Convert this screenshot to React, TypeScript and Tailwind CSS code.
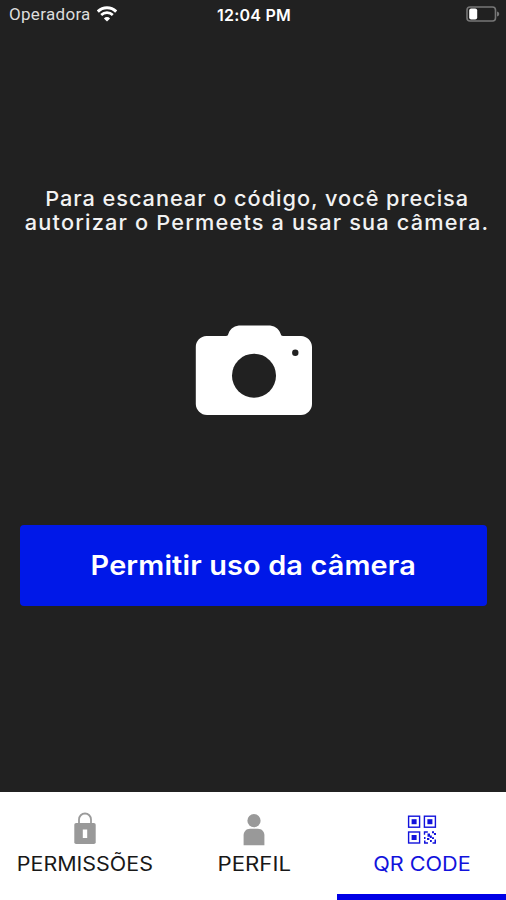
/**
 * Camera permission screen
 */

import React from 'react';

const WifiIcon: React.FC = () => (
  <svg width="20" height="16" viewBox="0 0 20 16" fill="none" stroke="#fff">
    <path d="M0.8 5.6a13 13 0 0 1 18.4 0" strokeWidth="3" />
    <path d="M4.2 9a8.2 8.2 0 0 1 11.6 0" strokeWidth="2.6" />
    <path d="M10 15.6l-3.1-3.2a4.4 4.4 0 0 1 6.2 0z" fill="#fff" stroke="none" />
  </svg>
);

const BatteryIcon: React.FC = () => (
  <svg width="34" height="16" viewBox="0 0 34 16">
    <rect x="1" y="1" width="28.5" height="14" rx="3" fill="none" stroke="#777" strokeWidth="1.6" />
    <rect x="3.2" y="2.5" width="8" height="11" rx="2" fill="#fff" />
    <path d="M31 5.5v5c1.8-.6 2.2-1.4 2.2-2.5s-.4-1.9-2.2-2.5z" fill="#777" />
  </svg>
);

const CameraIcon: React.FC = () => (
  <svg width="128" height="100" viewBox="0 0 128 100">
    <path
      d="M16.5 16H36c1.5 0 2-.8 2.5-2.5C40.5 8 45 5.5 51 5.5h27c6 0 10.5 2.5 12.5 8 .5 1.7 1 2.5 2.5 2.5h18c6 0 11 5 11 11v57c0 6-5 11-11 11H17c-6 0-11.2-5-11.2-11V27c0-6 4.7-11 10.7-11z"
      fill="#fff"
    />
    <circle cx="64" cy="55.7" r="22" fill="#212121" />
    <circle cx="105.3" cy="32.8" r="3.2" fill="#212121" />
  </svg>
);

const LockIcon: React.FC = () => (
  <svg width="24" height="34" viewBox="0 0 24 34">
    <path d="M6 12.5V7.5a6 6 0 0 1 12 0v5" fill="none" stroke="#9b9b9b" strokeWidth="1.8" />
    <rect x="1.3" y="11" width="21.4" height="21" rx="1.8" fill="#999" />
    <rect x="9.8" y="17.5" width="4.4" height="8.5" fill="#fff" />
  </svg>
);

const PersonIcon: React.FC = () => (
  <svg width="24" height="34" viewBox="0 0 24 34" fill="#999">
    <circle cx="12" cy="8.7" r="6.6" />
    <path d="M1.6 33.3V23.5c0-4 2.5-6.8 6.5-6.8h7.8c4 0 6.5 2.8 6.5 6.8v9.8z" />
  </svg>
);

const QrIcon: React.FC = () => (
  <svg width="30" height="34" viewBox="0 0 30 34" fill="#1212dc">
    <g fill="none" stroke="#1212dc" strokeWidth="1.4">
      <rect x="1.6" y="4.2" width="11" height="11" />
      <rect x="17.4" y="4.2" width="11" height="11" />
      <rect x="1.6" y="20" width="11" height="11" />
    </g>
    <rect x="4.6" y="7.2" width="5" height="5" />
    <rect x="20.4" y="7.2" width="5" height="5" />
    <rect x="4.6" y="23" width="5" height="5" />
    <path d="M16.8 19.3h4v1.4h-2.6v2h-1.4zM20.5 21.5H23v2h1.8V26h-2v-1.2h-2.3zM25 19.3h2v2h-2zM27 21h2v2h-2zM17 25h1.5v2H17zM20 26h2.3v2H20zM25 25.3h2v1.8h-2zM17 28.5h1.5v1.8H21v1.4h-4zM23 28h1.8v2H23zM27.5 27.5H29v4.2h-3.5v-1.4h2z" />
  </svg>
);

const App: React.FC = () => {
  return (
    <div className="flex flex-col w-[506px] h-[900px] overflow-hidden bg-[#212121] font-['Inter',sans-serif] text-white">
      <header className="grid grid-cols-3 items-center h-[28px] shrink-0 pl-[9px] pr-[6px]">
        <div className="flex items-center gap-[6px] font-['Roboto',sans-serif] text-[17px] text-[#ddd]">
          <span className="pt-px tracking-[0.31px]">Operadora</span>
          <WifiIcon />
        </div>
        <div className="pr-px pt-px text-center text-[16px] font-semibold tracking-[0.25px] whitespace-nowrap">12:04 PM</div>
        <div className="flex justify-end">
          <BatteryIcon />
        </div>
      </header>

      <main className="flex flex-col items-center h-[764px] shrink-0">
        <p className="mt-[159px] pl-[9px] text-center text-[20.5px] leading-[24.3px] font-medium whitespace-nowrap text-[#f2f2f2]">
          <span className="block scale-x-[1.06] tracking-[0.9px]">Para escanear o código, você precisa</span>
          <span className="block scale-x-[1.06] tracking-[1.1px]">autorizar o Permeets a usar sua câmera.</span>
        </p>
        <div className="mt-[84px] pl-[2px]">
          <CameraIcon />
        </div>
        <button className="mt-[105px] ml-px w-[467px] h-[81.5px] rounded-[4px] bg-[#0018e8] pt-[2px] text-[26.5px] font-semibold">
          <span className="inline-block scale-x-[1.09] tracking-[0.13px]">Permitir uso da câmera</span>
        </button>
      </main>

      <nav className="grid grid-cols-3 h-[108px] shrink-0 bg-white text-[19.5px] leading-[24px] text-[#181818]">
        <div className="flex flex-col items-center pt-[20px] pl-px">
          <LockIcon />
          <span className="mt-[6px] scale-x-[1.1]">PERMISSÕES</span>
        </div>
        <div className="flex flex-col items-center pt-[20px] pl-[2px]">
          <PersonIcon />
          <span className="mt-[6px] scale-x-[1.14]">PERFIL</span>
        </div>
        <div className="flex flex-col items-center pt-[20px] border-b-[6px] border-[#0000e6] text-[#1212dc]">
          <QrIcon />
          <span className="mt-[6px] scale-x-[1.11]">QR CODE</span>
        </div>
      </nav>
    </div>
  );
};

export default App;
